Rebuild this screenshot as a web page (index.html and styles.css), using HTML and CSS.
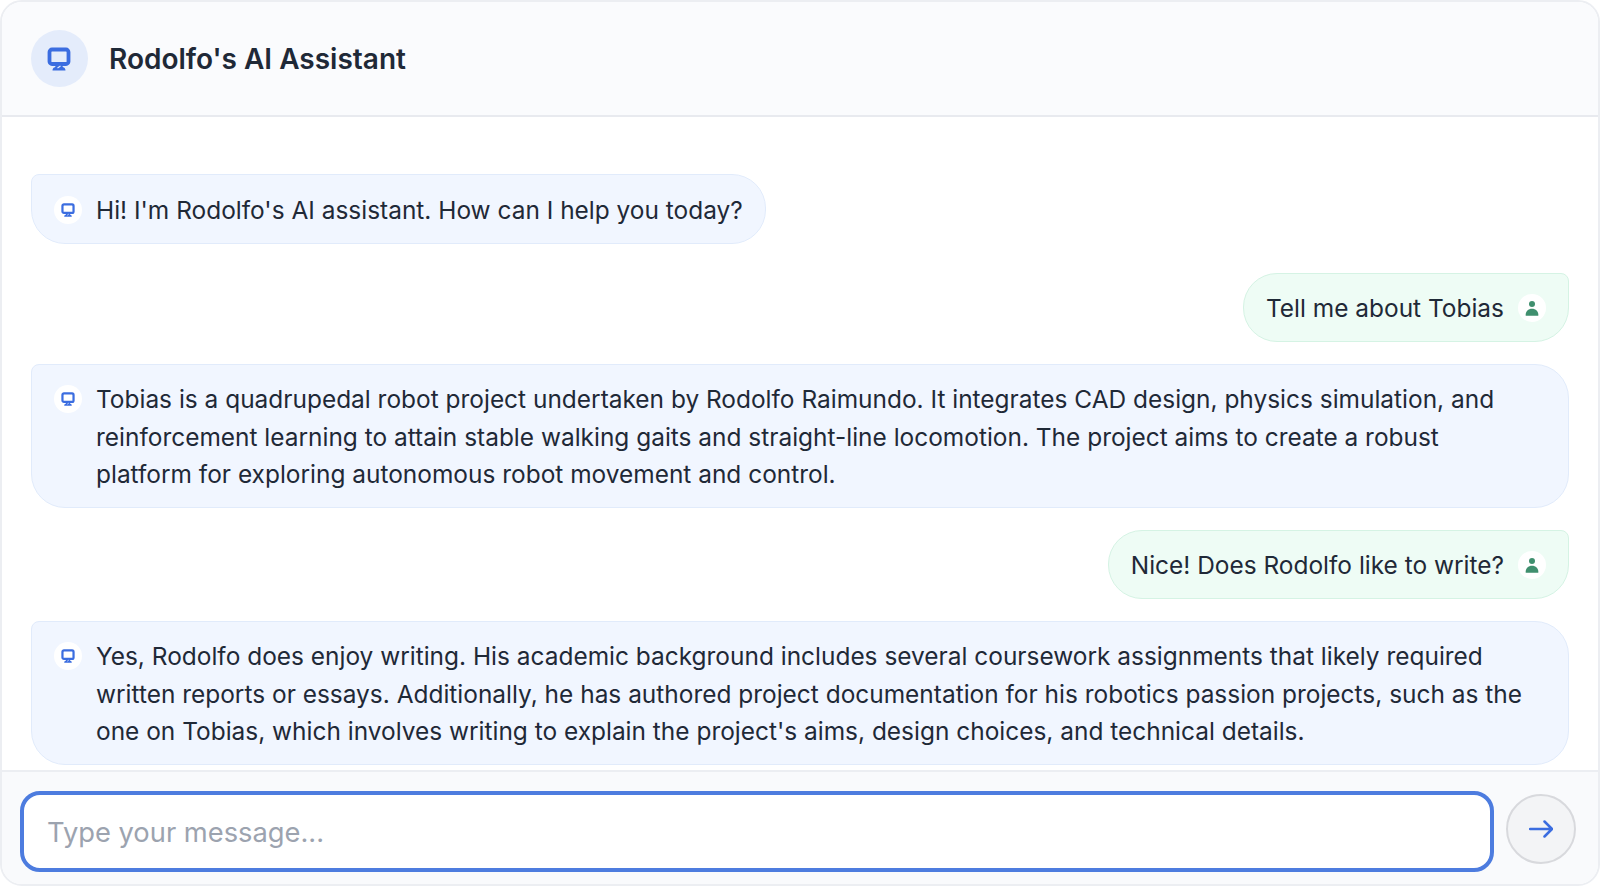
FILE: index.html
```html
<!DOCTYPE html>
<html lang="en">
<head>
    <meta charset="UTF-8">
    <meta name="viewport" content="width=device-width, initial-scale=1.0">
    <title>Rodolfo's AI Assistant</title>
    <link rel="stylesheet" href="styles.css">
</head>
<body>
    <svg class="icon-defs" width="0" height="0">
        <symbol id="bot" viewBox="0 0 24 24">
            <rect x="2.500" y="2.500" width="19" height="14.500" rx="2.500" fill="none" stroke="currentColor" stroke-width="3.800"/>
            <path d="M5.500 23.500c0-1.800 1-3.300 2.500-3.300l1-2.200h6l1 2.200c1.500 0 2.500 1.500 2.500 3.300z" fill="currentColor"/>
            <path d="M10.500 21l3-2" stroke="#e4ecfb" stroke-width="1.200"/>
        </symbol>
        <symbol id="user" viewBox="0 0 24 24">
            <circle cx="12" cy="6.500" r="4"/>
            <path d="M3.500 21.500c0-5 3.500-8.500 8.500-8.500s8.500 3.500 8.500 8.500c0 .5-.4.800-.9.800H4.400c-.5 0-.9-.3-.9-.8z"/>
        </symbol>
    </svg>

    <div class="chat">
        <header class="chat-header">
            <div class="header-avatar"><svg class="header-icon"><use href="#bot"/></svg></div>
            <h1>Rodolfo's AI Assistant</h1>
        </header>

        <main class="messages">
            <div class="message bot first">
                <span class="avatar"><svg><use href="#bot"/></svg></span>
                <p>Hi! I'm Rodolfo's AI assistant. How can I help you today?</p>
            </div>
            <div class="message user">
                <p>Tell me about Tobias</p>
                <span class="avatar"><svg><use href="#user"/></svg></span>
            </div>
            <div class="message bot long">
                <span class="avatar"><svg><use href="#bot"/></svg></span>
                <p>Tobias is a quadrupedal robot project undertaken by Rodolfo Raimundo. It integrates CAD design, physics simulation, and reinforcement learning to attain stable walking gaits and straight-line locomotion. The project aims to create a robust platform for exploring autonomous robot movement and control.</p>
            </div>
            <div class="message user">
                <p>Nice! Does Rodolfo like to write?</p>
                <span class="avatar"><svg><use href="#user"/></svg></span>
            </div>
            <div class="message bot long">
                <span class="avatar"><svg><use href="#bot"/></svg></span>
                <p>Yes, Rodolfo does enjoy writing. His academic background includes several coursework assignments that likely required written reports or essays. Additionally, he has authored project documentation for his robotics passion projects, such as the one on Tobias, which involves writing to explain the project's aims, design choices, and technical details.</p>
            </div>
        </main>

        <footer class="composer">
            <input class="composer-input" type="text" placeholder="Type your message...">
            <button class="send" type="button" aria-label="Send">
                <svg viewBox="0 0 24 24" fill="none" stroke="currentColor" stroke-width="2.500" stroke-linecap="round" stroke-linejoin="round">
                    <path d="M1 12h22M15.500 4.500 23 12l-7.500 7.500"/>
                </svg>
            </button>
        </footer>
    </div>
</body>
</html>
```

FILE: styles.css
```css
* {
    box-sizing: border-box;
}

body {
    margin: 0;
    height: 100vh;
    background: #fff;
    font-family: Inter, "Noto Sans", sans-serif;
    color: #1f2937;
}

.icon-defs {
    position: absolute;
}

.chat {
    display: flex;
    flex-direction: column;
    height: 886px;
    border: 2px solid #eceef2;
    border-radius: 22px;
    overflow: hidden;
    background: #fff;
}

/* Cabecera */
.chat-header {
    display: flex;
    align-items: center;
    gap: 21px;
    height: 115px;
    flex-shrink: 0;
    padding: 0 29px;
    background: #fafbfd;
    border-bottom: 2px solid #e8eaef;
}

.header-avatar {
    display: flex;
    align-items: center;
    justify-content: center;
    width: 57px;
    height: 57px;
    border-radius: 50%;
    background: #e4ecfb;
    color: #3b6de0;
}

.header-icon {
    width: 24px;
    height: 24px;
    margin-right: 2px;
}

.chat-header h1 {
    margin: 0;
    font-size: 28px;
    font-weight: 600;
    color: #1f2937;
}

/* Mensajes */
.messages {
    flex: 1;
    min-height: 0;
    overflow: hidden;
    padding: 57px 29px 0;
    display: flex;
    flex-direction: column;
    gap: 21.500px;
}

.message {
    display: flex;
    align-items: flex-start;
    gap: 14px;
    padding: 16.500px 22px 13.500px;
    border: 1px solid;
    font-size: 24.440px;
    line-height: 37.500px;
}

.message p {
    margin: 0;
}

.message.first {
    margin-bottom: 7.500px;
}

.message.bot {
    align-self: flex-start;
    background: #f1f6ff;
    border-color: #e1ebfb;
    border-radius: 8px 34px 34px 34px;
    color: #1f2937;
}

.message.long {
    align-self: stretch;
    padding-right: 35px;
}

.message.user {
    align-self: flex-end;
    background: #eefcf5;
    border-color: #d5f3e4;
    border-radius: 34px 8px 34px 34px;
}

.avatar {
    display: flex;
    align-items: center;
    justify-content: center;
    flex-shrink: 0;
    width: 28px;
    height: 28px;
    margin-top: 4px;
    border-radius: 50%;
    background: #fff;
}

.avatar svg {
    width: 14px;
    height: 14px;
}

.bot .avatar {
    color: #3b6de0;
}

.user .avatar {
    color: #3f8f6e;
    fill: currentColor;
}

.user .avatar svg {
    width: 18px;
    height: 18px;
}

/* Entrada */
.composer {
    display: flex;
    align-items: center;
    gap: 12px;
    height: 114px;
    flex-shrink: 0;
    padding: 7px 22px 0 18px;
    background: #f9fafc;
    border-top: 2px solid #eceef2;
}

.composer-input {
    flex: 1;
    height: 81px;
    padding: 1px 23px 0;
    border: 4px solid #4d7cdf;
    border-radius: 20px;
    background: #fff;
    font: inherit;
    font-size: 27.300px;
    outline: none;
}

.composer-input::placeholder {
    color: #9ca3af;
    opacity: 1;
}

.send {
    display: flex;
    align-items: center;
    justify-content: center;
    width: 70px;
    height: 70px;
    margin-bottom: 5px;
    padding: 0;
    border: 2px solid #d8d9dd;
    border-radius: 50%;
    background: #f3f4f6;
    color: #3b6de0;
}

.send svg {
    width: 24px;
    height: 24px;
}
```
